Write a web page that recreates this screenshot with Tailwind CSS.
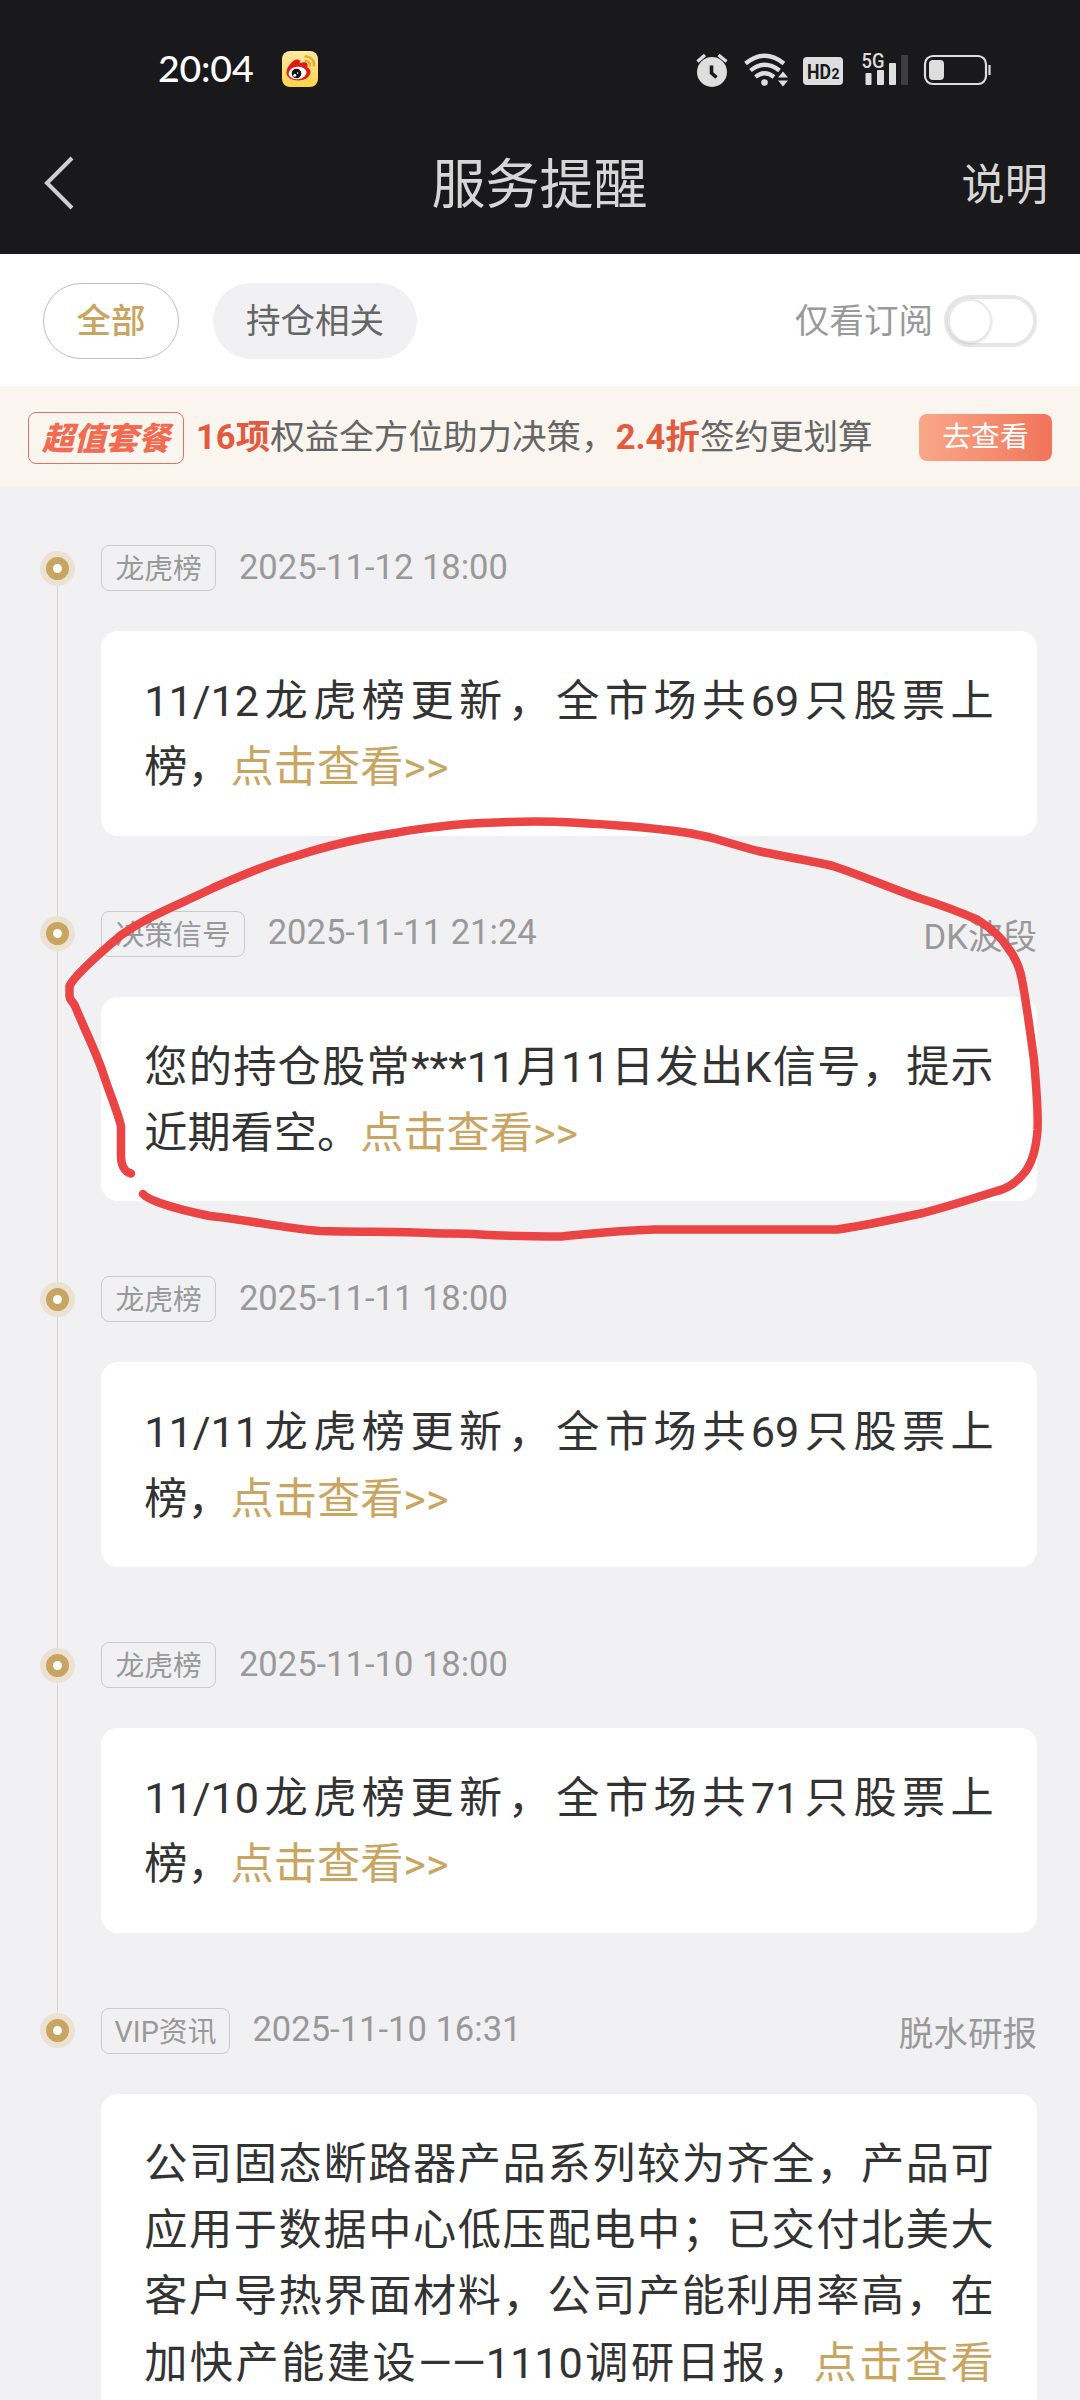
<!DOCTYPE html>
<html lang="zh-CN">
<head>
<meta charset="utf-8">
<title>服务提醒</title>
<script src="https://cdn.jsdelivr.net/npm/@tailwindcss/browser@4"></script>
</head>
<body class="bg-[#f1f1f4]">
<div class="relative flex h-[2400px] w-[1080px] flex-col overflow-hidden bg-[#f1f1f4] font-['Roboto','Noto_Sans_CJK_SC',sans-serif] text-[34.56px]">

  <!-- status bar + title -->
  <header class="h-[254px] shrink-0 bg-[#19191b]">
    <div class="flex h-[138px] items-center pl-[158px] pr-[88px]">
      <span class="w-[124px] pb-[3px] font-['Lato',sans-serif] text-[37.5px] font-medium leading-none tracking-[-0.2px] text-white">20:04</span>
      <svg class="h-9 w-9" viewBox="0 0 36 36">
        <defs><linearGradient id="wb" x1="0" y1="0" x2="0" y2="1"><stop offset="0" stop-color="#ffe9a8"/><stop offset="1" stop-color="#ffd447"/></linearGradient></defs>
        <rect width="36" height="36" rx="8" fill="url(#wb)"/>
        <path d="M4.500 22C4.500 16 10 9.500 14.500 8.500c3-.5 4 1.200 3.400 3.700 3-1.400 7-1.600 7.600 1 .3 1.300-.2 2.300-.2 3.300 2 .8 3.500 2.500 3.200 5-.6 5-6.500 8-12.500 8S4.500 26.500 4.500 22z" fill="#e01a16"/>
        <ellipse cx="15.500" cy="22" rx="9" ry="6.200" fill="#fff" transform="rotate(-6 15.500 22)"/>
        <circle cx="14.500" cy="22.500" r="4.800" fill="#111"/>
        <circle cx="12.800" cy="24.200" r="1.500" fill="#fff"/><circle cx="15.600" cy="22" r=".8" fill="#fff"/>
        <path d="M23.500 5.500a8 8 0 0 1 8.500 9M24 10a4 4 0 0 1 4 4.500" fill="none" stroke="#f2a72e" stroke-width="2.400" stroke-linecap="round"/>
      </svg>
      <svg class="-mt-px ml-auto h-[36px] w-[297px]" viewBox="695 50 297 36">
        <g fill="#dedede">
          <circle cx="712" cy="71" r="15"/>
          <path d="M697.500 60.500 705 54M718.500 54l8 6.500" stroke="#dedede" stroke-width="3.400" fill="none"/>
          <path d="M711.500 64.500v7.500l5 4.500" stroke="#19191b" stroke-width="3.600" fill="none"/>
          <g fill="none" stroke="#dedede" stroke-width="4.200">
            <path d="M745.500 62.500q19-15.500 38.500 0M750.500 69.500q14-11.500 29 0M755.500 76q9-7.500 18.500 0"/>
          </g>
          <circle cx="764.500" cy="81.500" r="3.300"/>
          <path d="M778 76.500l5-6 5 6zM778 79.500h10l-5 6z"/>
          <rect x="803" y="56" width="40" height="28" rx="4"/>
          <rect x="865.500" y="72" width="6" height="12" rx="1"/>
          <rect x="877" y="69" width="7" height="15" rx="1"/>
          <rect x="889" y="62" width="7" height="22" rx="1"/>
          <rect x="901" y="54" width="7" height="30" rx="1" fill="#3e3e40"/>
          <rect x="925" y="55" width="61" height="28" rx="8" fill="none" stroke="#dedede" stroke-width="2.200"/>
          <rect x="929" y="59" width="15" height="20" rx="4"/>
          <path d="M989.500 64v10" stroke="#dedede" stroke-width="2.200"/>
        </g>
        <text x="807" y="78" font-family="Roboto" font-weight="700" font-size="21" fill="#19191b" textLength="24" lengthAdjust="spacingAndGlyphs">HD</text>
        <text x="831.500" y="78" font-family="Roboto" font-weight="700" font-size="14" fill="#19191b">2</text>
        <text x="861.500" y="67" font-family="Roboto" font-weight="500" font-size="20" fill="#dedede" textLength="23" lengthAdjust="spacingAndGlyphs">5G</text>
      </svg>
    </div>
    <div class="grid h-[94px] grid-cols-3 items-center pl-[43px] pr-[32px] text-[#d6d6d6]">
      <svg class="mb-[5px] h-[54px] w-8" viewBox="0 0 32 54" fill="none" stroke="#cfcfcf" stroke-width="4"><path d="M29 2 4 27 29 52"/></svg>
      <h1 class="whitespace-nowrap pr-[12px] pt-[2px] text-center text-[54px] leading-none">服务提醒</h1>
      <span class="pt-[2px] text-right text-[43.2px] leading-none">说明</span>
    </div>
  </header>

  <!-- filters -->
  <nav class="flex h-[132px] shrink-0 items-center bg-white pl-[43px] pr-[43px] pt-px leading-none">
    <button class="flex h-[76px] w-[136px] items-center justify-center rounded-full border border-[#bdbdbd] pt-[2px] font-medium text-[#c9a562]">全部</button>
    <button class="ml-[34px] flex h-[76px] w-[204px] items-center justify-center rounded-full bg-[#f1f1f4] pt-[2px] text-[#666]">持仓相关</button>
    <span class="ml-auto pt-[2px] text-[#999]">仅看订阅</span>
    <span class="ml-[11px] flex h-[52px] w-[93px] rounded-full border-4 border-[#e6e6e6] bg-white"><i class="h-11 w-11 rounded-full border-2 border-[#e9e9e9] bg-white shadow"></i></span>
  </nav>

  <!-- promotion -->
  <section class="flex h-[101px] shrink-0 items-center bg-[#faf5ee] pl-[28px] pr-[28px] pt-[2px] leading-none text-[#666]">
    <span class="flex h-[52px] w-[156px] items-center justify-center whitespace-nowrap rounded-lg border border-[#dd7560] pt-[2px] text-[32px] font-black italic text-[#f26a4f]">超值套餐</span>
    <p class="ml-[12px] whitespace-nowrap"><b class="text-[#e35b3e]">16项</b>权益全方位助力决策，<b class="text-[#e35b3e]">2.4折</b>签约更划算</p>
    <button class="ml-auto flex h-[47px] w-[133px] items-center justify-center rounded-lg bg-linear-to-r from-[#f9a788] to-[#f1745b] text-[28.8px] text-white">去查看</button>
  </section>

  <!-- timeline -->
  <main class="flex flex-col pl-[40px] pr-[43px] pt-[58px]">
    <article class="flex h-[365.700px] gap-[26px]">
      <div class="flex w-[35px] shrink-0 flex-col items-center pt-[5.500px]"><i class="flex h-[35px] w-[35px] shrink-0 items-center justify-center rounded-full bg-[#ebe2d4]"><i class="h-[23px] w-[23px] rounded-full border-[7px] border-[#c9a562] bg-white"></i></i><i class="-mb-[6px] w-px grow bg-[#e3d6c0]"></i></div>
      <div class="grow"><div class="flex h-[46px] items-center leading-none text-[#999]"><span class="flex h-[46px] items-center rounded-lg border border-[#cbcbcd] px-[13.500px] pt-[3px] text-[28.8px]">龙虎榜</span><time class="-mt-[2px] ml-[22.500px]">2025-11-12 18:00</time></div>
      <p class="mt-[40px] rounded-[17px] bg-white px-[43.200px] pb-[34px] pt-[38px] text-justify text-[43.200px] leading-[66.300px] text-[#333]">11/12龙虎榜更新，全市场共69只股票上榜，<a class="text-[#c9a562]">点击查看&gt;&gt;</a></p></div>
    </article>
    <article class="flex h-[365.700px] gap-[26px]">
      <div class="flex w-[35px] shrink-0 flex-col items-center pt-[5.500px]"><i class="flex h-[35px] w-[35px] shrink-0 items-center justify-center rounded-full bg-[#ebe2d4]"><i class="h-[23px] w-[23px] rounded-full border-[7px] border-[#c9a562] bg-white"></i></i><i class="-mb-[6px] w-px grow bg-[#e3d6c0]"></i></div>
      <div class="grow"><div class="flex h-[46px] items-center leading-none text-[#999]"><span class="flex h-[46px] items-center rounded-lg border border-[#cbcbcd] px-[13.500px] pt-[3px] text-[28.8px]">决策信号</span><time class="-mt-[2px] ml-[22.500px]">2025-11-11 21:24</time><span class="ml-auto pt-[7px]">DK波段</span></div>
      <p class="mt-[40px] rounded-[17px] bg-white px-[43.200px] pb-[34px] pt-[38px] text-justify text-[43.200px] leading-[66.300px] text-[#333]">您的持仓股常***11月11日发出K信号，提示近期看空。<a class="text-[#c9a562]">点击查看&gt;&gt;</a></p></div>
    </article>
    <article class="flex h-[365.700px] gap-[26px]">
      <div class="flex w-[35px] shrink-0 flex-col items-center pt-[5.500px]"><i class="flex h-[35px] w-[35px] shrink-0 items-center justify-center rounded-full bg-[#ebe2d4]"><i class="h-[23px] w-[23px] rounded-full border-[7px] border-[#c9a562] bg-white"></i></i><i class="-mb-[6px] w-px grow bg-[#e3d6c0]"></i></div>
      <div class="grow"><div class="flex h-[46px] items-center leading-none text-[#999]"><span class="flex h-[46px] items-center rounded-lg border border-[#cbcbcd] px-[13.500px] pt-[3px] text-[28.8px]">龙虎榜</span><time class="-mt-[2px] ml-[22.500px]">2025-11-11 18:00</time></div>
      <p class="mt-[40px] rounded-[17px] bg-white px-[43.200px] pb-[34px] pt-[38px] text-justify text-[43.200px] leading-[66.300px] text-[#333]">11/11龙虎榜更新，全市场共69只股票上榜，<a class="text-[#c9a562]">点击查看&gt;&gt;</a></p></div>
    </article>
    <article class="flex h-[365.700px] gap-[26px]">
      <div class="flex w-[35px] shrink-0 flex-col items-center pt-[5.500px]"><i class="flex h-[35px] w-[35px] shrink-0 items-center justify-center rounded-full bg-[#ebe2d4]"><i class="h-[23px] w-[23px] rounded-full border-[7px] border-[#c9a562] bg-white"></i></i><i class="-mb-[6px] w-px grow bg-[#e3d6c0]"></i></div>
      <div class="grow"><div class="flex h-[46px] items-center leading-none text-[#999]"><span class="flex h-[46px] items-center rounded-lg border border-[#cbcbcd] px-[13.500px] pt-[3px] text-[28.8px]">龙虎榜</span><time class="-mt-[2px] ml-[22.500px]">2025-11-10 18:00</time></div>
      <p class="mt-[40px] rounded-[17px] bg-white px-[43.200px] pb-[34px] pt-[38px] text-justify text-[43.200px] leading-[66.300px] text-[#333]">11/10龙虎榜更新，全市场共71只股票上榜，<a class="text-[#c9a562]">点击查看&gt;&gt;</a></p></div>
    </article>
    <article class="flex gap-[26px]">
      <div class="flex w-[35px] shrink-0 flex-col items-center pt-[5.500px]"><i class="flex h-[35px] w-[35px] shrink-0 items-center justify-center rounded-full bg-[#ebe2d4]"><i class="h-[23px] w-[23px] rounded-full border-[7px] border-[#c9a562] bg-white"></i></i></div>
      <div class="grow"><div class="flex h-[46px] items-center leading-none text-[#999]"><span class="flex h-[46px] items-center rounded-lg border border-[#cbcbcd] px-[12.500px] pt-[3px] text-[28.8px]">VIP资讯</span><time class="-mt-[2px] ml-[22.500px]">2025-11-10 16:31</time><span class="ml-auto pt-[7px]">脱水研报</span></div>
      <p class="mt-[40px] rounded-[17px] bg-white px-[43.200px] pb-[34px] pt-[38px] text-justify text-[43.200px] leading-[66.300px] text-[#333]">公司固态断路器产品系列较为齐全，产品可应用于数据中心低压配电中；已交付北美大客户导热界面材料，公司产能利用率高，在加快产能建设——1110调研日报，<a class="text-[#c9a562]">点击查看&gt;&gt;</a></p></div>
    </article>
  </main>

  <!-- hand-drawn highlight -->
  <svg class="pointer-events-none absolute left-0 top-[800px] h-[460px] w-[1080px]" viewBox="0 800 1080 460" fill="none" stroke="#eb4444" stroke-width="8.500" stroke-linecap="round" stroke-linejoin="round">
    <path d="M131 1173.500C124 1172 121 1164 121 1156V1126C117 1110 109 1092 102 1070C95 1050 84 1028 75 1006C72 1000 69 1000 69.500 995V986C74 976 100 953 120 936C145 917 185 902 213 888C240 876 268 864 296 856C320 848 345 842 365 838C405 831 440 825 482 823C512 821.500 545 821 572 822.500C610 824.500 645 827 682 832C695 834 705 836 716 839C730 843 742 847 758 851C785 857 808 860 833 866C860 875 888 887 916 897C938 904 958 911 978 920C992 929 1002 938 1008 948C1016 958 1020 968 1022 980C1026 1000 1030 1030 1034 1060C1036 1085 1038.500 1110 1037.500 1130C1036 1150 1032 1163 1025 1172C1018 1181 1010 1188 997 1191C975 1198 950 1206 923 1213C895 1219 868 1225 837 1229.500H655C610 1231 590 1234 562 1236.500C530 1236.500 505 1236 480 1234.500C460 1233 445 1234 430 1233C405 1231.500 360 1232 320 1231C280 1228 250 1220 210 1216C185 1211 150 1202 143 1194"/>
  </svg>
</div>
</body>
</html>
